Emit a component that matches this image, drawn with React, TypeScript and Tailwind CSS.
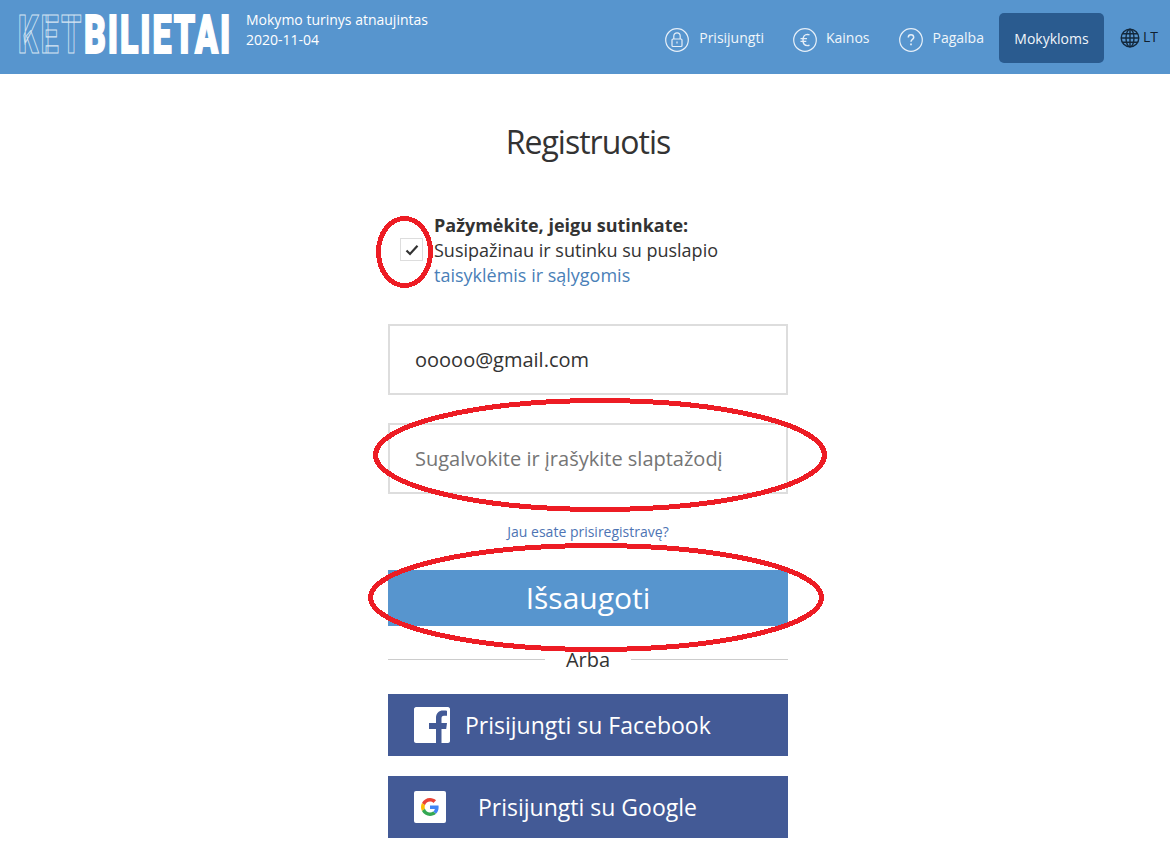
function CircleIcon({ children }: { children: React.ReactNode }) {
  return (
    <svg width="24" height="24" viewBox="0 0 24 24" fill="none" stroke="#e6eff8" strokeWidth="1.2" className="shrink-0">
      <circle cx="12" cy="12" r="11.3" />
      {children}
    </svg>
  );
}

function NavItem({ icon, label, className }: { icon: React.ReactNode; label: string; className: string }) {
  return (
    <a className={"mt-[6px] flex items-center " + className}>
      {icon}
      <span className="-mt-[4px] text-[14px] leading-5 text-[#f0f5fa]">{label}</span>
    </a>
  );
}

function Logo() {
  return (
    <svg width="216" height="40" viewBox="0 0 216 40" className="shrink-0 overflow-visible" fontFamily="Roboto, sans-serif">
      <text
        transform="translate(1 38) scale(0.6 1)"
        fontSize="53"
        fontWeight="900"
        letterSpacing="4"
        fill="none"
        stroke="#d5e5f3"
        strokeWidth="1.200"
      >
        KET
      </text>
      <text
        transform="translate(67 38) scale(0.64 1)"
        fontSize="53"
        fontWeight="900"
        letterSpacing="3"
        fill="#ffffff"
        stroke="#ffffff"
        strokeWidth="1.800"
      >
        BILIETAI
      </text>
    </svg>
  );
}

export default function App() {
  return (
    <div className="relative h-[843px] overflow-hidden bg-white font-['Open_Sans',sans-serif] text-[#333]">
      <header className="flex h-[74px] items-center bg-[#5795ce] pl-[17px]">
        <div className="-mt-[5px]">
          <Logo />
        </div>
        <div className="ml-[13px] -mt-[15px] text-[14px] leading-5 text-white">
          <div>Mokymo turinys atnaujintas</div>
          <div>2020-11-04</div>
        </div>
        <nav className="ml-auto flex items-center">
          <NavItem
            className="gap-[10px]"
            label="Prisijungti"
            icon={
              <CircleIcon>
                <rect x="7" y="11" width="10" height="7.500" rx="1" />
                <path d="M8.800 11V8a3.200 3.200 0 0 1 6.400 0v3" />
                <path d="M12 13.500v2" />
              </CircleIcon>
            }
          />
          <NavItem
            className="ml-[29px] gap-[9px]"
            label="Kainos"
            icon={
              <CircleIcon>
                <path d="M16.500 6.900a5 5 0 0 0-2-.5c-2.900 0-4.500 2.300-4.500 5.600s1.600 5.600 4.500 5.600a5 5 0 0 0 2-.5" strokeWidth="1.400" />
                <path d="M7.500 10.700h6.500M7.500 13.300h5.800" strokeWidth="1.200" />
              </CircleIcon>
            }
          />
          <NavItem
            className="ml-[29px] gap-[10px]"
            label="Pagalba"
            icon={
              <CircleIcon>
                <path d="M9.300 9.500a2.700 2.700 0 0 1 5.400 0c0 1.900-2.700 2-2.700 4.200" strokeWidth="1.500" />
                <path d="M12 15.600v1.700" strokeWidth="1.700" />
              </CircleIcon>
            }
          />
          <a className="ml-[15px] mt-[2px] flex h-[50px] w-[105px] items-center justify-center rounded-[5px] bg-[#2a5b8f] text-[14px] text-[#f0f5fa]">
            Mokykloms
          </a>
          <div className="ml-[16px] mr-[12px] mt-[1px] flex items-center gap-[3px] text-[14px] text-[#10202f]">
            <svg width="20" height="20" viewBox="0 0 20 20" fill="none" stroke="#13283c" strokeWidth="1.400">
              <circle cx="10" cy="10" r="8.800" />
              <ellipse cx="10" cy="10" rx="4" ry="8.800" />
              <path d="M10 1.200v17.600M1.200 10h17.600M2.500 5.800h15M2.500 14.200h15" />
            </svg>
            <span className="-mt-[3px]">LT</span>
          </div>
        </nav>
      </header>

      <main className="flex flex-col items-center pl-[6px]">
        <h1 className="mt-[46px] text-[32px] leading-[44px] font-normal tracking-[-1px] text-[#333]">Registruotis</h1>

        <div className="w-[400px]">
          <div className="mt-[49px] flex items-center">
            <div className="-mt-[2px] ml-[12px] flex h-[23px] w-[23px] shrink-0 items-center justify-center border border-[#ddd]">
              <svg width="14" height="12" viewBox="0 0 14 12" fill="none" stroke="#333" strokeWidth="2.200">
                <path d="M1.500 6.500 5 10 12.500 1.800" />
              </svg>
            </div>
            <div className="ml-[11px] text-[18px] leading-[25px]">
              <div className="font-bold">Pažymėkite, jeigu sutinkate:</div>
              <div>Susipažinau ir sutinku su puslapio</div>
              <a className="text-[#4a7fb8]">taisyklėmis ir sąlygomis</a>
            </div>
          </div>

          <div className="mt-[36px] flex h-[71px] items-center border-2 border-[#ddd] pl-[25px] text-[20px]">ooooo@gmail.com</div>
          <div className="mt-[28px] flex h-[71px] items-center border-2 border-[#ddd] pl-[25px] text-[20px] text-[#757575]">
            Sugalvokite ir įrašykite slaptažodį
          </div>

          <div className="mt-[28px] text-center text-[14px] leading-5 text-[#4d74b4]">Jau esate prisiregistravę?</div>

          <button className="mt-[28px] block h-[56px] w-full bg-[#5795ce] pb-[2px] text-[30px] text-white">Išsaugoti</button>

          <div className="mt-[20px] flex h-[27px] items-center">
            <div className="h-px flex-1 bg-[#ccc]" />
            <span className="px-[21px] text-[20px] leading-[27px]">Arba</span>
            <div className="h-px flex-1 bg-[#ccc]" />
          </div>

          <a className="mt-[21px] flex h-[62px] items-center bg-[#435a96] pl-[26px] text-[23px] text-white">
            <svg width="36" height="36" viewBox="0 0 36 36" className="shrink-0">
              <path
                fill="#ffffff"
                d="M34 0H2C1 0 0 1 0 2v32c0 1 1 2 2 2h20V22h-7v-6h7v-5c0-5 3-7.500 7-7.500 2 0 3.500.1 4 .2v5h-3c-2 0-2.500 1-2.500 2.800V16h5.500l-.8 6h-4.700v14H34c1 0 2-1 2-2V2c0-1-1-2-2-2z"
              />
            </svg>
            <span className="ml-[15px]">Prisijungti su Facebook</span>
          </a>

          <a className="mt-[20px] flex h-[62px] items-center bg-[#435a96] pl-[26px] text-[23px] text-white">
            <span className="flex h-[32px] w-[32px] shrink-0 items-center justify-center rounded-[2px] bg-white">
              <svg width="18" height="18" viewBox="0 0 48 48">
                <path fill="#EA4335" d="M24 9.500c3.540 0 6.710 1.220 9.210 3.600l6.850-6.850C35.900 2.380 30.470 0 24 0 14.620 0 6.510 5.380 2.560 13.220l7.980 6.190C12.430 13.720 17.740 9.500 24 9.500z" />
                <path fill="#4285F4" d="M46.980 24.550c0-1.570-.15-3.090-.38-4.550H24v9.020h12.940c-.58 2.960-2.260 5.480-4.780 7.180l7.730 6c4.510-4.180 7.090-10.360 7.090-17.650z" />
                <path fill="#FBBC05" d="M10.530 28.590c-.48-1.450-.76-2.990-.76-4.590s.27-3.140.76-4.590l-7.980-6.190C.92 16.460 0 20.120 0 24c0 3.880.92 7.540 2.560 10.780l7.970-6.190z" />
                <path fill="#34A853" d="M24 48c6.480 0 11.930-2.130 15.890-5.810l-7.730-6c-2.150 1.450-4.920 2.300-8.160 2.300-6.260 0-11.570-4.220-13.470-9.910l-7.980 6.190C6.510 42.620 14.620 48 24 48z" />
              </svg>
            </span>
            <span className="ml-[32px]">Prisijungti su Google</span>
          </a>
        </div>
      </main>

      <svg
        className="pointer-events-none absolute inset-0"
        width="1170"
        height="843"
        fill="none"
        stroke="#ed1c24"
        strokeWidth="5"
        shapeRendering="crispEdges"
      >
        <ellipse cx="404.500" cy="252" rx="26" ry="33.500" />
        <ellipse cx="600" cy="455" rx="224.500" ry="54.500" />
        <ellipse cx="596" cy="597.500" rx="225.500" ry="52" />
      </svg>
    </div>
  );
}
